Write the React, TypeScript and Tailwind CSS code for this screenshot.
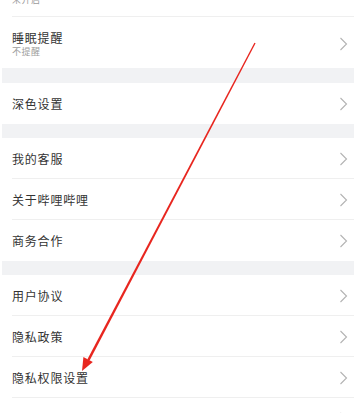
import React from 'react';

const font = { fontFamily: '"Noto Sans CJK SC", "Noto Sans", sans-serif' };

function Chevron() {
  return (
    <svg width="9" height="14" viewBox="0 0 9 14" className="shrink-0">
      <polyline points="1.5,1 7.5,7 1.5,13" fill="none" stroke="#b3b3b3" strokeWidth="1.1" />
    </svg>
  );
}

type Item = { title: string; sub?: string };

function Row({ item, last }: { item: Item; last?: boolean }) {
  const tall = !!item.sub;
  return (
    <div className={`pl-3 bg-white ${tall ? 'h-[51px]' : 'h-[41px]'}`}>
      <div
        className={`h-full flex items-center justify-between pr-[6px] ${
          last ? '' : 'border-b border-[#efefef]'
        } ${tall ? 'pt-[3px]' : 'pt-px'}`}
      >
        <div className="flex flex-col">
          <p className="text-[12px] leading-[14px] tracking-[0.8px] text-[#333333]">{item.title}</p>
          {item.sub && (
            <p className="mt-px text-[9px] leading-[12px] tracking-[0.5px] text-[#9c9c9c]">{item.sub}</p>
          )}
        </div>
        <Chevron />
      </div>
    </div>
  );
}

function Group({ items, openEnd }: { items: Item[]; openEnd?: boolean }) {
  return (
    <div className="bg-white">
      {items.map((it, i) => (
        <Row key={i} item={it} last={!openEnd && i === items.length - 1} />
      ))}
    </div>
  );
}

function Gap({ h }: { h: string }) {
  return <div className={`ml-[2px] bg-[#f1f2f4] ${h}`} />;
}

export default function App() {
  return (
    <div className="relative w-[354px] h-[413px] overflow-hidden bg-white" style={font}>
      <div className="mt-[-34px]">
        <Group
          items={[
            { title: '青少年模式', sub: '未开启' },
            { title: '睡眠提醒', sub: '不提醒' },
          ]}
        />
        <Gap h="h-[15px]" />
        <Group items={[{ title: '深色设置' }]} />
        <Gap h="h-[14px]" />
        <Group items={[{ title: '我的客服' }, { title: '关于哔哩哔哩' }, { title: '商务合作' }]} />
        <Gap h="h-[14px]" />
        <Group
          openEnd
          items={[
            { title: '用户协议' },
            { title: '隐私政策' },
            { title: '隐私权限设置' },
            { title: '第三方信息共享清单' },
          ]}
        />
      </div>

      {/* red annotation arrow */}
      <svg className="absolute inset-0 pointer-events-none" width="354" height="413" viewBox="0 0 354 413">
        <polygon points="255.6,43.3 254.4,42.7 87.3,359.4 89.6,360.6" fill="#e8261f" />
        <polygon points="82,371 83.4,357 92.8,362" fill="#e8261f" />
      </svg>
    </div>
  );
}
